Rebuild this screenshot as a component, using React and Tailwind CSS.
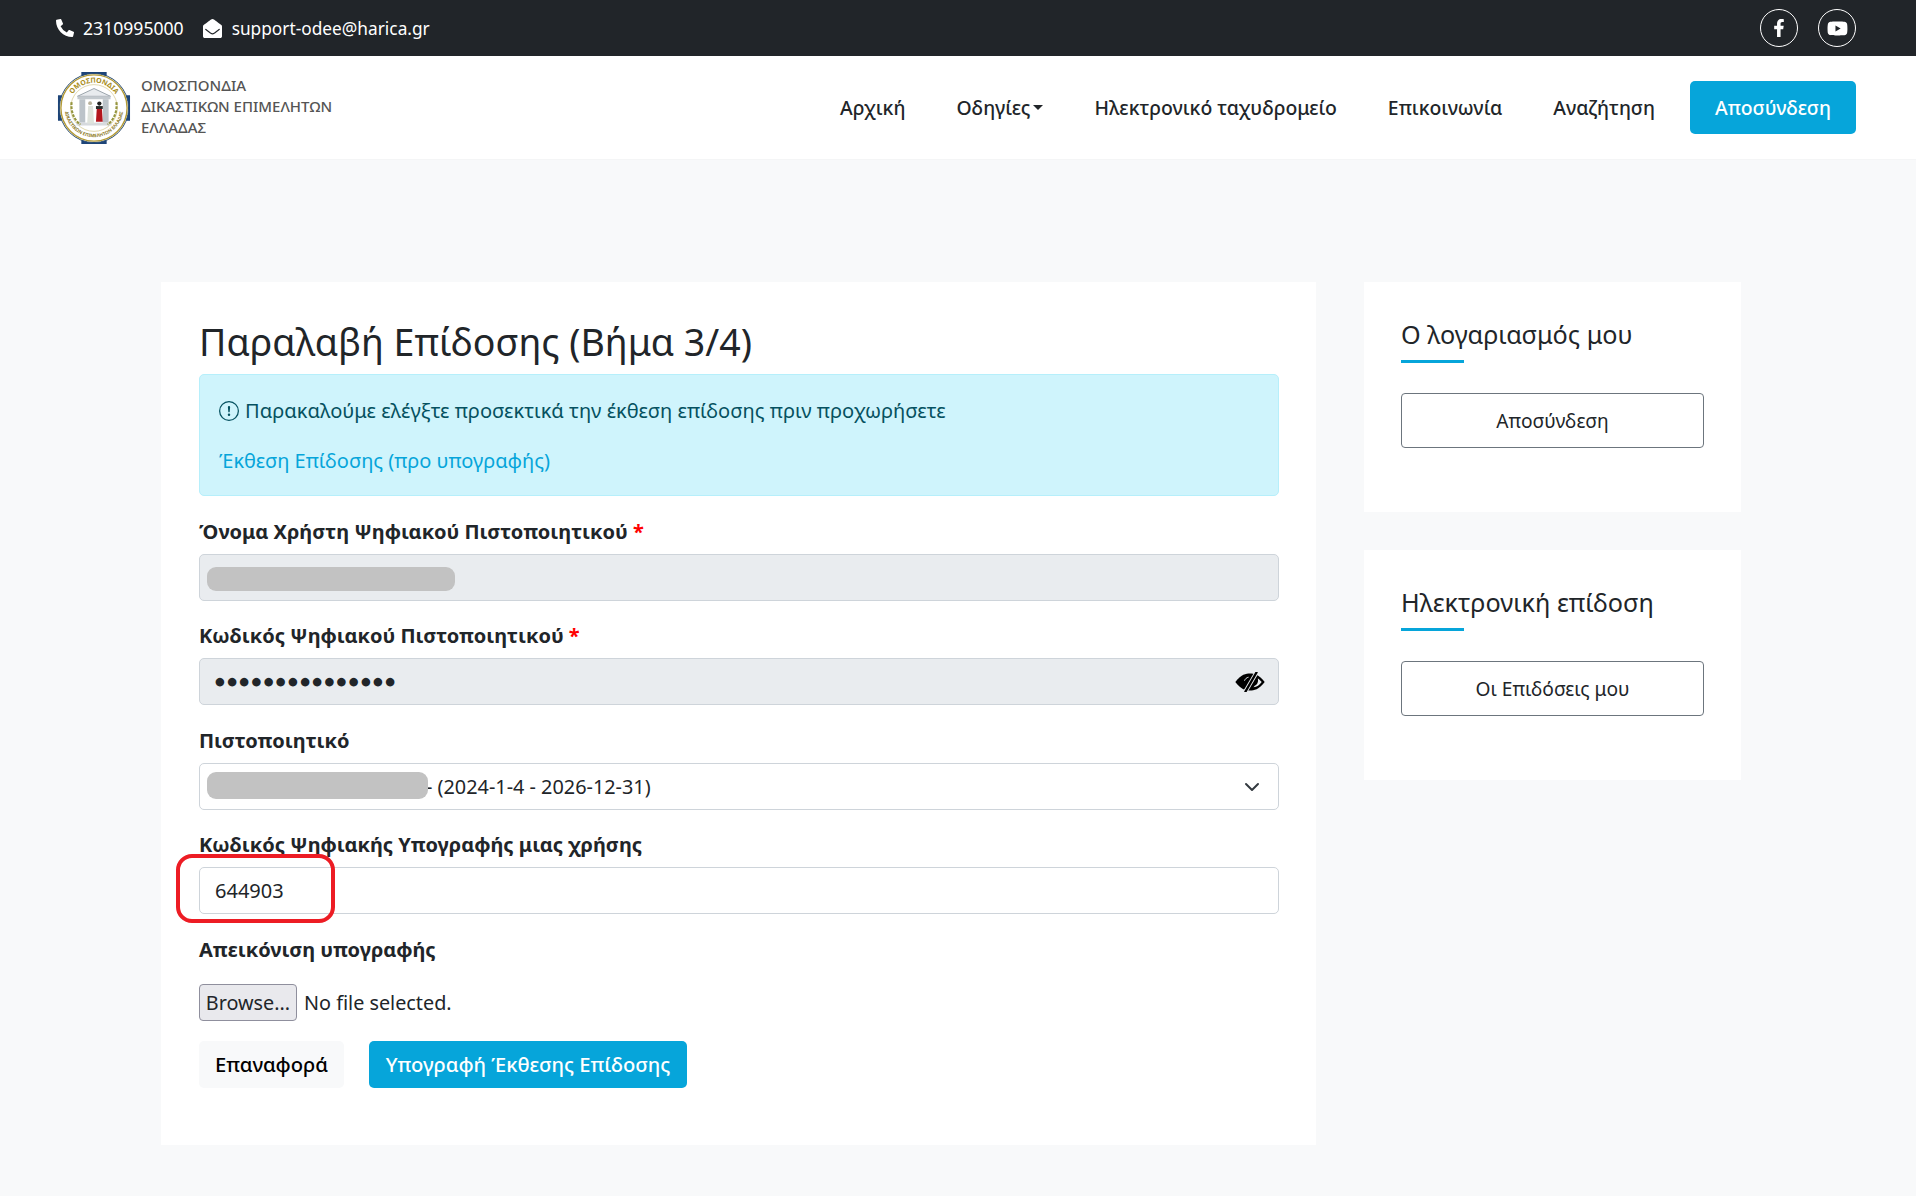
import React from "react";
import { FaPhoneAlt, FaEnvelopeOpen, FaFacebookF, FaYoutube } from "react-icons/fa";
import { BsExclamationCircle } from "react-icons/bs";

const font = { fontFamily: '"Noto Sans", "Open Sans", sans-serif' };

function Logo() {
  return (
    <svg width="74" height="74" viewBox="0 0 76 76" className="shrink-0">
      <defs>
        <path id="arcTop" d="M 12 38 A 26 26 0 0 1 64 38" />
        <path id="arcBot" d="M 8 38 A 30 30 0 0 0 68 38" />
      </defs>
      <path d="M25 1h26v6h-26zM25 69h26v6h-26zM1 25h5v26h-5zM70 25h5v26h-5z" fill="#1d4478" />
      <circle cx="38" cy="38" r="35.5" fill="#fff" stroke="#24486f" strokeWidth="1" />
      <circle cx="38" cy="38" r="34" fill="#fff" stroke="#b39a35" strokeWidth="1.4" />
      <circle cx="38" cy="38" r="24" fill="#fff" stroke="#d9cd97" strokeWidth="0.8" />
      <text fontSize="7.2" fontWeight="700" fill="#a88c20" style={font}>
        <textPath href="#arcTop" startOffset="50%" textAnchor="middle">ΟΜΟΣΠΟΝΔΙΑ</textPath>
      </text>
      <text fontSize="4.8" fontWeight="700" fill="#8e7a2a" style={font}>
        <textPath href="#arcBot" startOffset="50%" textAnchor="middle">ΔΙΚΑΣΤΙΚΩΝ ΕΠΙΜΕΛΗΤΩΝ ΕΛΛΑΔΑΣ</textPath>
      </text>
      <path d="M21 26 38 18l17 8z" fill="#e8ebee" stroke="#9aa3ab" strokeWidth="1" />
      <rect x="21" y="26" width="34" height="3" fill="#c3c9ce" />
      <rect x="23" y="29" width="6" height="24" fill="#bcc3c9" />
      <rect x="47" y="29" width="6" height="24" fill="#bcc3c9" />
      <rect x="20" y="53" width="36" height="3" fill="#d7dadd" />
      <path d="M32 36h5l1 18h-7z" fill="#dfe3dc" />
      <circle cx="34" cy="33" r="2" fill="#b9b29c" />
      <path d="M41 37h5l1 15h-7z" fill="#b3151d" />
      <circle cx="43.5" cy="33.5" r="2.2" fill="#222" />
      <path d="M40 36h7v3h-7z" fill="#2b2b2b" />
      <path d="M15 32c-1 9 2 18 9 23M61 32c1 9-2 18-9 23" fill="none" stroke="#95953f" strokeWidth="2.2" strokeDasharray="3 1.2" />
    </svg>
  );
}

function EyeSlash() {
  const bg = "#e9ecef";
  return (
    <svg width="30" height="20" viewBox="0 0 30 20">
      <path fill="#000" d="M0.3 10C6 2.200 11 1.500 15 1.500S24 2.200 29.700 10C24 17.800 19 18.500 15 18.500S6 17.800 0.300 10z" />
      <path d="M22.500 -1 9.500 21" stroke={bg} strokeWidth="4.200" fill="none" />
      <path d="M21.500 0.500 10.500 19.500" stroke="#000" strokeWidth="2.400" strokeLinecap="round" fill="none" />
      <path fill={bg} d="M18.500 15.200C21.800 15 24.600 13 26.700 10 25.500 8.300 24 7 22.800 6.400 23.800 9.800 21.800 13 20 13.400z" />
      <path d="M13.500 5.200C11.800 5.500 10.300 6.700 9.500 8.700" stroke={bg} strokeWidth="1" fill="none" />
    </svg>
  );
}

function Label({ children, req }) {
  return (
    <label className="block text-[20px] leading-[28px] font-bold text-[#212529] mb-[8px]">
      {children}
      {req && <span className="text-[#ff0000]"> *</span>}
    </label>
  );
}

function SideCard({ title, btn }) {
  return (
    <div className="bg-white h-[230px] px-[37px] pt-[36px]">
      <h4 className="text-[25.2px] leading-[33px] font-normal text-[#212529]">{title}</h4>
      <div className="w-[63px] h-[3px] bg-[#06a5da] mt-[9px]" />
      <button className="mt-[30px] w-[303px] h-[55px] pt-[2px] bg-white border border-[#6c757d] rounded text-[19.2px] text-[#212529]">
        {btn}
      </button>
    </div>
  );
}

export default function App() {
  return (
    <div style={font} className="min-h-[1196px] bg-[#f8f9fa] text-[#212529]">
      <div className="h-[56px] bg-[#212529] flex items-center justify-between pl-[56px] pr-[60px] text-white text-[17.6px]">
        <div className="flex items-center">
          <FaPhoneAlt className="text-[18px] mr-[9px]" />
          <span>2310995000</span>
          <FaEnvelopeOpen className="text-[19px] ml-[19px] mr-[10px]" />
          <span className="text-[17.3px] pt-[1px]">support-odee@harica.gr</span>
        </div>
        <div className="flex items-center gap-[20px]">
          <span className="w-[38px] h-[38px] rounded-full border border-white flex items-center justify-center">
            <FaFacebookF className="text-[18px]" />
          </span>
          <span className="w-[38px] h-[38px] rounded-full border border-white flex items-center justify-center">
            <FaYoutube className="text-[21px]" />
          </span>
        </div>
      </div>

      <nav className="h-[104px] bg-white flex items-center justify-between pl-[57px] pr-[60px] border-b border-[#f4f5f6]">
        <div className="flex items-center gap-[10px]">
          <Logo />
          <div className="text-[15px] leading-[21px] text-[#555] font-medium pb-[2px]">
            <div>ΟΜΟΣΠΟΝΔΙΑ</div>
            <div>ΔΙΚΑΣΤΙΚΩΝ ΕΠΙΜΕΛΗΤΩΝ</div>
            <div>ΕΛΛΑΔΑΣ</div>
          </div>
        </div>
        <div className="flex items-center text-[19.4px] font-medium text-[#212529]">
          <span className="mr-[51px]">Αρχική</span>
          <span className="mr-[51px] flex items-center">
            Οδηγίες
            <span className="ml-[3px] w-0 h-0 border-x-[5px] border-x-transparent border-t-[5px] border-t-[#212529]" />
          </span>
          <span className="mr-[51px]">Ηλεκτρονικό ταχυδρομείο</span>
          <span className="mr-[51px]">Επικοινωνία</span>
          <span className="mr-[35px]">Αναζήτηση</span>
          <button className="w-[166px] h-[53px] bg-[#06a5da] text-white rounded-[5px] font-medium">Αποσύνδεση</button>
        </div>
      </nav>

      <main className="flex items-start pl-[161px] pt-[122px] gap-[48px]">
        <section className="w-[1155px] h-[863px] bg-white pl-[38px] pr-[37px] pt-[37px]">
          <h1 className="text-[37.5px] leading-[46px] font-normal text-[#212529] mb-[9px]">Παραλαβή Επίδοσης (Βήμα 3/4)</h1>

          <div className="h-[122px] bg-[#cff4fc] border border-[#b6effb] rounded-[5px] px-[19px] pt-[21px] mb-[22px] text-[20px] leading-[29px] text-[#055160]">
            <div className="flex items-center">
              <BsExclamationCircle className="text-[20px] mr-[6px]" />
              <span className="text-[20.08px]">Παρακαλούμε ελέγξτε προσεκτικά την έκθεση επίδοσης πριν προχωρήσετε</span>
            </div>
            <div className="mt-[21px] text-[#06a5da]">Έκθεση Επίδοσης (προ υπογραφής)</div>
          </div>

          <Label req>Όνομα Χρήστη Ψηφιακού Πιστοποιητικού</Label>
          <div className="relative h-[47px] bg-[#e9ecef] border border-[#ced4da] rounded-[5px] mb-[21px]">
            <div className="absolute left-[7px] top-[12px] w-[248px] h-[24px] rounded-[9px] bg-[#c2c2c2]" />
          </div>

          <Label req>Κωδικός Ψηφιακού Πιστοποιητικού</Label>
          <div className="relative h-[47px] bg-[#e9ecef] border border-[#ced4da] rounded-[5px] mb-[22px] flex items-center justify-between pl-[15px] pr-[13px]">
            <span className="text-[11.2px] tracking-[2.4px] pt-[2px] text-[#212529]" style={{ fontFamily: '"DejaVu Sans", sans-serif' }}>●●●●●●●●●●●●●●●</span>
            <EyeSlash />
          </div>

          <Label>Πιστοποιητικό</Label>
          <div className="relative h-[47px] bg-white border border-[#ced4da] rounded-[5px] mb-[21px] flex items-center justify-between pl-[15px] pr-[18px]">
            <div className="absolute left-[7px] top-[8px] w-[221px] h-[27px] rounded-[9px] bg-[#c2c2c2]" />
            <span className="pl-[211px] text-[19.85px] text-[#212529]">- (2024-1-4 - 2026-12-31)</span>
            <svg width="16" height="16" viewBox="0 0 16 16" fill="none" stroke="#343a40" strokeWidth="2" strokeLinecap="round" strokeLinejoin="round">
              <path d="M2 5l6 6 6-6" />
            </svg>
          </div>

          <Label>Κωδικός Ψηφιακής Υπογραφής μιας χρήσης</Label>
          <div className="relative h-[47px] bg-white border border-[#ced4da] rounded-[5px] mb-[22px] flex items-center pl-[15px] text-[20px] text-[#212529]">
            644903
            <div className="absolute left-[-24px] top-[-14px] w-[159px] h-[69px] border-[4px] border-[#ed1c24] rounded-[16px]" />
          </div>

          <Label>Απεικόνιση υπογραφής</Label>
          <div className="flex items-center mt-[20px] h-[37px] text-[19.8px] text-[#212529]">
            <button className="w-[98px] h-[37px] bg-[#e9e9ed] border border-[#8f8f9d] rounded-[4px]">Browse...</button>
            <span className="ml-[7px]">No file selected.</span>
          </div>

          <div className="flex mt-[20px] text-[20.2px] font-medium">
            <button className="w-[145px] h-[47px] bg-[#f8f9fa] rounded-[5px] text-[#000]">Επαναφορά</button>
            <button className="ml-[25px] w-[318px] h-[47px] bg-[#06a5da] rounded-[5px] text-white">Υπογραφή Έκθεσης Επίδοσης</button>
          </div>
        </section>

        <aside className="w-[377px] flex flex-col gap-[38px]">
          <SideCard title="Ο λογαριασμός μου" btn="Αποσύνδεση" />
          <SideCard title="Ηλεκτρονική επίδοση" btn="Οι Επιδόσεις μου" />
        </aside>
      </main>
    </div>
  );
}
